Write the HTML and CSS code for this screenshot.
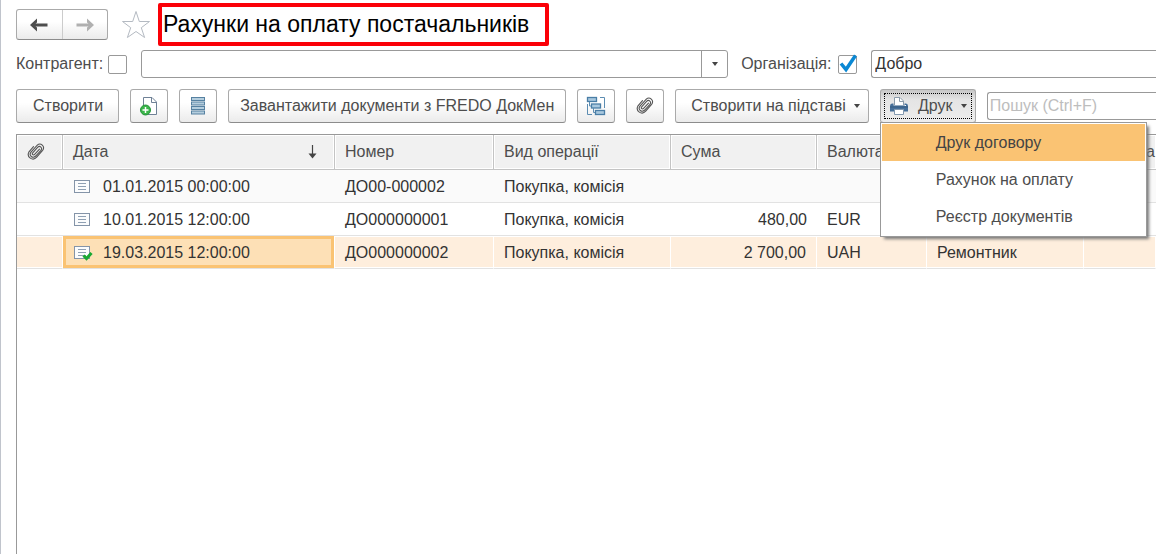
FILE: index.html
```
<!DOCTYPE html>
<html lang="uk">
<head>
<meta charset="utf-8">
<title>Рахунки на оплату постачальників</title>
<link rel="stylesheet" href="styles.css">
</head>
<body>
<svg class="defs" width="0" height="0" aria-hidden="true">
  <symbol id="clip" viewBox="0 0 18 18">
    <path d="M12.500 6.200 7.600 11.400C6.300 12.800 4.500 11.300 5.700 9.800L10.600 4.400C12.800 2.100 15.900 4.800 13.900 7.300L8.700 13C5.800 16 1.400 12.500 4 9.200L10.300 2.200C13.600-.900 18.500 3.600 15.600 7.400L9.700 14.200C5.800 18.500-.900 14.200 2 8.800L6.500 3.600" fill="none" stroke="#555" stroke-width="1.100" stroke-linecap="round"/>
  </symbol>
  <symbol id="doc" viewBox="0 0 20 16">
    <rect x="1.500" y="1.500" width="15" height="12" fill="#fbfcfd" stroke="#8494a8"/>
    <path d="M5 4.500h8M5 7.500h8M5 10.500h8" stroke="#8fa0b3" stroke-width="1"/>
  </symbol>
</svg>
<main class="page">
  <header class="title-row">
    <div class="nav">
      <button class="nav-btn" type="button" aria-label="Назад"><svg width="18" height="14" viewBox="0 0 18 14"><path d="M0 7 7 0.500V4.500L5.500 5.500H17.500V8.500H5.500L7 9.500V13.500Z" fill="#4d4d4d"/></svg></button>
      <button class="nav-btn" type="button" aria-label="Вперед"><svg width="18" height="14" viewBox="0 0 18 14"><path d="M18 7 11 0.500V4.500L12.500 5.500H0.500V8.500H12.500L11 9.500V13.500Z" fill="#b0b0b0"/></svg></button>
    </div>
    <button class="star" type="button" aria-label="До обраного"><svg width="30" height="30" viewBox="0 0 30 30"><path d="M15 1.500 18.300 11.500H28.500L20.300 17.700 23.600 27.500 15 21.500 6.400 27.500 9.700 17.700 1.500 11.500H11.700Z" fill="#fff" stroke="#b4bac2"/></svg></button>
    <h1 class="title">Рахунки на оплату постачальників</h1>
  </header>

  <div class="filter-row">
    <label class="check-label" for="use-partner">Контрагент:</label>
    <input class="check" id="use-partner" type="checkbox">
    <span class="combo">
      <select class="combo-select" aria-label="Контрагент"><option></option></select>
      <span class="combo-arrow"><i class="caret"></i></span>
    </span>
    <label class="check-label" for="use-org">Організація:</label>
    <span class="check-wrap">
      <input class="check" id="use-org" type="checkbox" checked>
      <svg class="tick" width="20" height="20" viewBox="0 0 20 20"><path d="M3 9.500 8 15.500 17.500 1.500" fill="none" stroke="#0a88d4" stroke-width="3.500"/></svg>
    </span>
    <input class="field" type="text" value="Добро" aria-label="Організація">
  </div>

  <div class="toolbar">
    <button class="btn btn-create" type="button">Створити</button>
    <button class="btn btn-icon" type="button" aria-label="Створити копіюванням">
      <svg width="20" height="20" viewBox="0 0 20 20"><path d="M4.500 1.500H13L17.500 6V18.500H4.500Z" fill="#fff" stroke="#6f8196"/><path d="M12.500 1.500V6.500H17.500" fill="none" stroke="#6f8196"/><circle cx="6.500" cy="14" r="5" fill="#3bb54a" stroke="#24953a"/><path d="M3.500 14H9.500M6.500 11V17" stroke="#fff" stroke-width="1.500"/></svg>
    </button>
    <button class="btn btn-icon" type="button" aria-label="Список">
      <svg width="14" height="20" viewBox="0 0 14 20"><g fill="#b5cede" stroke="#5681a1"><rect x=".5" y="1.500" width="13" height="3"/><rect x=".5" y="6" width="13" height="3"/><rect x=".5" y="10.500" width="13" height="3"/><rect x=".5" y="15" width="13" height="3"/></g></svg>
    </button>
    <button class="btn btn-load" type="button">Завантажити документи з FREDO ДокМен</button>
    <button class="btn btn-icon" type="button" aria-label="Структура підпорядкованості">
      <svg width="20" height="20" viewBox="0 0 20 20"><g fill="#a9c8de" stroke="#4a7ea6" stroke-width="1.300"><rect x="1.500" y="1.500" width="9" height="4"/><rect x="5.500" y="8" width="9" height="4"/><rect x="9.500" y="14.500" width="9" height="4"/></g><path d="M14 1.500H18.500V12M1.500 8V18.500H6M3.500 6V10H5M7.500 12V16.500H9" fill="none" stroke="#5c8db2"/></svg>
    </button>
    <button class="btn btn-icon" type="button" aria-label="Файли"><svg width="18" height="18"><use href="#clip"/></svg></button>
    <button class="btn btn-drop" type="button">Створити на підставі <i class="caret"></i></button>
    <div class="print">
      <button class="btn btn-print" type="button" aria-expanded="true">
        <svg width="20" height="20" viewBox="0 0 20 20"><path d="M5.500 9V1.500H11L14.500 5V9" fill="#fff" stroke="#8c9cab"/><path d="M10.500 1.500V5.500H14.500" fill="none" stroke="#8c9cab"/><path d="M3 7.500H4.500V9.500H15.500V7.500H17Q19 7.500 19 10V15.500H1V10Q1 7.500 3 7.500Z" fill="#47709a"/><rect x="1" y="10.500" width="18" height="1" fill="#355a80"/><rect x="15.500" y="9" width="1.500" height="1" fill="#fff"/><path d="M5.500 13.500H14.500V18.500H5.500Z" fill="#fff" stroke="#8399af"/></svg>
        <span>Друк</span><i class="caret"></i>
      </button>
      <div class="menu" role="menu">
        <button class="menu-item menu-item-active" type="button" role="menuitem">Друк договору</button>
        <button class="menu-item" type="button" role="menuitem">Рахунок на оплату</button>
        <button class="menu-item" type="button" role="menuitem">Реєстр документів</button>
      </div>
    </div>
    <input class="field search" type="text" placeholder="Пошук (Ctrl+F)" aria-label="Пошук">
  </div>

  <div class="grid-area">
    <table class="grid">
      <colgroup><col class="c-clip"><col class="c-date"><col class="c-num"><col class="c-kind"><col class="c-sum"><col class="c-cur"><col class="c-partner"><col></colgroup>
      <thead>
        <tr>
          <th aria-label="Файли"><svg width="18" height="18"><use href="#clip"/></svg></th>
          <th><span class="sorted">Дата <svg width="9" height="14" viewBox="0 0 9 14"><path d="M4.500 0V11" stroke="#444" stroke-width="1.200"/><path d="M.5 8.500H8.500L4.500 13.500Z" fill="#444"/></svg></span></th>
          <th>Номер</th><th>Вид операції</th><th>Сума</th><th>Валюта</th><th></th><th class="last">а</th>
        </tr>
      </thead>
      <tbody>
        <tr class="alt"><td></td><td><span class="date"><svg width="20" height="16"><use href="#doc"/></svg>01.01.2015 00:00:00</span></td><td>ДО00-000002</td><td>Покупка, комісія</td><td class="num"></td><td></td><td></td><td></td></tr>
        <tr><td></td><td><span class="date"><svg width="20" height="16"><use href="#doc"/></svg>10.01.2015 12:00:00</span></td><td>ДО000000001</td><td>Покупка, комісія</td><td class="num">480,00</td><td>EUR</td><td></td><td></td></tr>
        <tr class="selected"><td></td><td class="current"><span class="date"><svg width="20" height="16"><use href="#doc"/><path d="M10.500 10.500 13.500 13.500 18.500 8" fill="none" stroke="#18a832" stroke-width="3"/></svg>19.03.2015 12:00:00</span></td><td>ДО000000002</td><td>Покупка, комісія</td><td class="num">2 700,00</td><td>UAH</td><td>Ремонтник</td><td></td></tr>
      </tbody>
    </table>
  </div>
</main>
</body>
</html>
```
FILE: styles.css
```
* { box-sizing: border-box; }

body {
  margin: 0;
  background: #fff;
  color: #333;
  font: 16px/20px "Liberation Sans", Arial, sans-serif;
  overflow: hidden;
}

button, input, select { font: inherit; color: inherit; margin: 0; }
svg { display: block; flex: none; }
.defs { position: absolute; }

.page {
  display: flex;
  flex-direction: column;
  min-height: 100vh;
  padding: 3px 0 0 15px;
  border-left: 1px solid #c0c4cc;
}

.title-row { display: flex; align-items: center; height: 43px; }

.nav {
  display: flex;
  width: 92px;
  height: 31px;
  border: 1px solid #aaa;
  border-bottom-color: #8c8c8c;
  border-radius: 3px;
  background: linear-gradient(#fff 40%, #ebebeb);
}
.nav-btn {
  display: flex;
  flex: 1;
  align-items: center;
  justify-content: center;
  padding: 0;
  border: 0;
  background: none;
}
.nav-btn + .nav-btn { border-left: 1px solid #ccc; }

.star { margin: 0 7px 0 13px; padding: 0; border: 0; background: none; }

.title {
  margin: 0;
  padding: 0 16px 0 1px;
  border: 4px solid #fb0007;
  border-radius: 2px;
  color: #000;
  font-size: 23px;
  font-weight: 400;
  line-height: 35px;
}

.filter-row {
  display: flex;
  align-items: center;
  height: 28px;
  margin-top: 4px;
}
.check-label { color: #4d4d4d; }
.check {
  display: block;
  flex: none;
  appearance: none;
  width: 19px;
  height: 19px;
  margin-left: 5px;
  border: 1px solid #999;
  border-radius: 2px;
  background: #fff;
}
.check-wrap { position: relative; flex: none; margin-left: 2px; }
.tick { position: absolute; right: -1px; top: -1px; pointer-events: none; }

.combo {
  position: relative;
  flex: none;
  width: 587px;
  height: 28px;
  margin: 0 13px 0 14px;
}
.combo-select {
  appearance: none;
  width: 100%;
  height: 100%;
  padding: 0 30px 0 4px;
  border: 1px solid #999;
  border-radius: 3px;
  background: #fff;
}
.combo-arrow {
  position: absolute;
  top: 1px;
  right: 1px;
  bottom: 1px;
  display: flex;
  align-items: center;
  justify-content: center;
  width: 26px;
  border-left: 1px solid #999;
  pointer-events: none;
}

.caret {
  flex: none;
  border: 3px solid transparent;
  border-top: 4px solid #444;
  border-bottom: 0;
}

.field {
  flex: 1;
  min-width: 0;
  height: 28px;
  margin-left: 14px;
  padding: 0 3px;
  border: 1px solid #999;
  border-right: 0;
  border-radius: 3px 0 0 3px;
  background: #fff;
}

.toolbar {
  display: flex;
  align-items: center;
  gap: 11px;
  margin-top: 11px;
}
.btn {
  display: flex;
  flex: none;
  align-items: center;
  justify-content: center;
  height: 34px;
  padding: 0 16px;
  border: 1px solid #aaa;
  border-bottom-color: #8c8c8c;
  border-radius: 3px;
  background: linear-gradient(#fff 40%, #ebebeb);
  color: #4d4d4d;
  white-space: nowrap;
}
.btn-create { padding: 0 15px 0 16px; }
.btn-icon { width: 38px; padding: 0; }
.btn-load { padding: 0 11px; }
.btn-drop { gap: 8px; padding: 0 8px 0 15px; }

.print { position: relative; flex: none; }
.btn-print {
  gap: 9px;
  width: 96px;
  padding: 0;
  background: linear-gradient(#c6c6c6, #e4e4e4 30%, #ededed);
  outline: 1px dotted #000;
  outline-offset: -5px;
}
.btn-print .caret { margin-left: -1px; }

.menu {
  position: absolute;
  z-index: 1;
  top: 33px;
  left: 0;
  width: 267px;
  padding: 1px;
  border: 1px solid #999;
  background: #fff;
  box-shadow: 3px 3px 3px -1px #777;
}
.menu-item {
  display: block;
  width: 100%;
  height: 37px;
  padding: 0 0 0 54px;
  border: 0;
  background: #fff;
  color: #4d4d4d;
  text-align: left;
}
.menu-item-active { background: #fac373; color: #444; }

.search { margin-left: 0; padding: 0 2px; }
.search::placeholder { color: #bdbdbd; opacity: 1; }

.grid-area {
  flex: 1;
  margin-top: 11px;
  border-top: 1px solid #999;
  border-left: 1px solid #999;
}
.grid {
  width: 100%;
  table-layout: fixed;
  border-collapse: separate;
  border-spacing: 0;
}
.c-clip { width: 46px; }
.c-date { width: 272px; }
.c-num { width: 159px; }
.c-kind { width: 177px; }
.c-sum { width: 146px; }
.c-cur { width: 110px; }
.c-partner { width: 157px; }

.grid th, .grid td {
  padding: 0 10px;
  text-align: left;
  font-weight: 400;
  white-space: nowrap;
}
.grid th {
  height: 35px;
  border-right: 1px solid #c4c4c4;
  border-bottom: 1px solid #c4c4c4;
  background: #f1f1f1;
  box-shadow: inset 0 0 0 1px #fff;
  color: #4d4d4d;
}
.grid .last { padding-right: 1px; border-right: 0; text-align: right; }
.grid td {
  height: 33px;
  padding-top: 2px;
  border-bottom: 1px solid #e2e2e2;
}
.grid .alt td { background: #fafafa; }
.grid .selected td {
  border-right: 1px solid #fff;
  background: #feeedd;
  box-shadow: inset 0 1px #fff, inset 0 -1px #fff;
}
.grid .selected .current {
  background: #fde0b6;
  box-shadow: inset 0 0 0 3px #fac373;
}
.grid .num { text-align: right; }

.sorted { display: flex; align-items: center; justify-content: space-between; padding-right: 7px; }
.date { display: flex; align-items: center; gap: 10px; }
```
